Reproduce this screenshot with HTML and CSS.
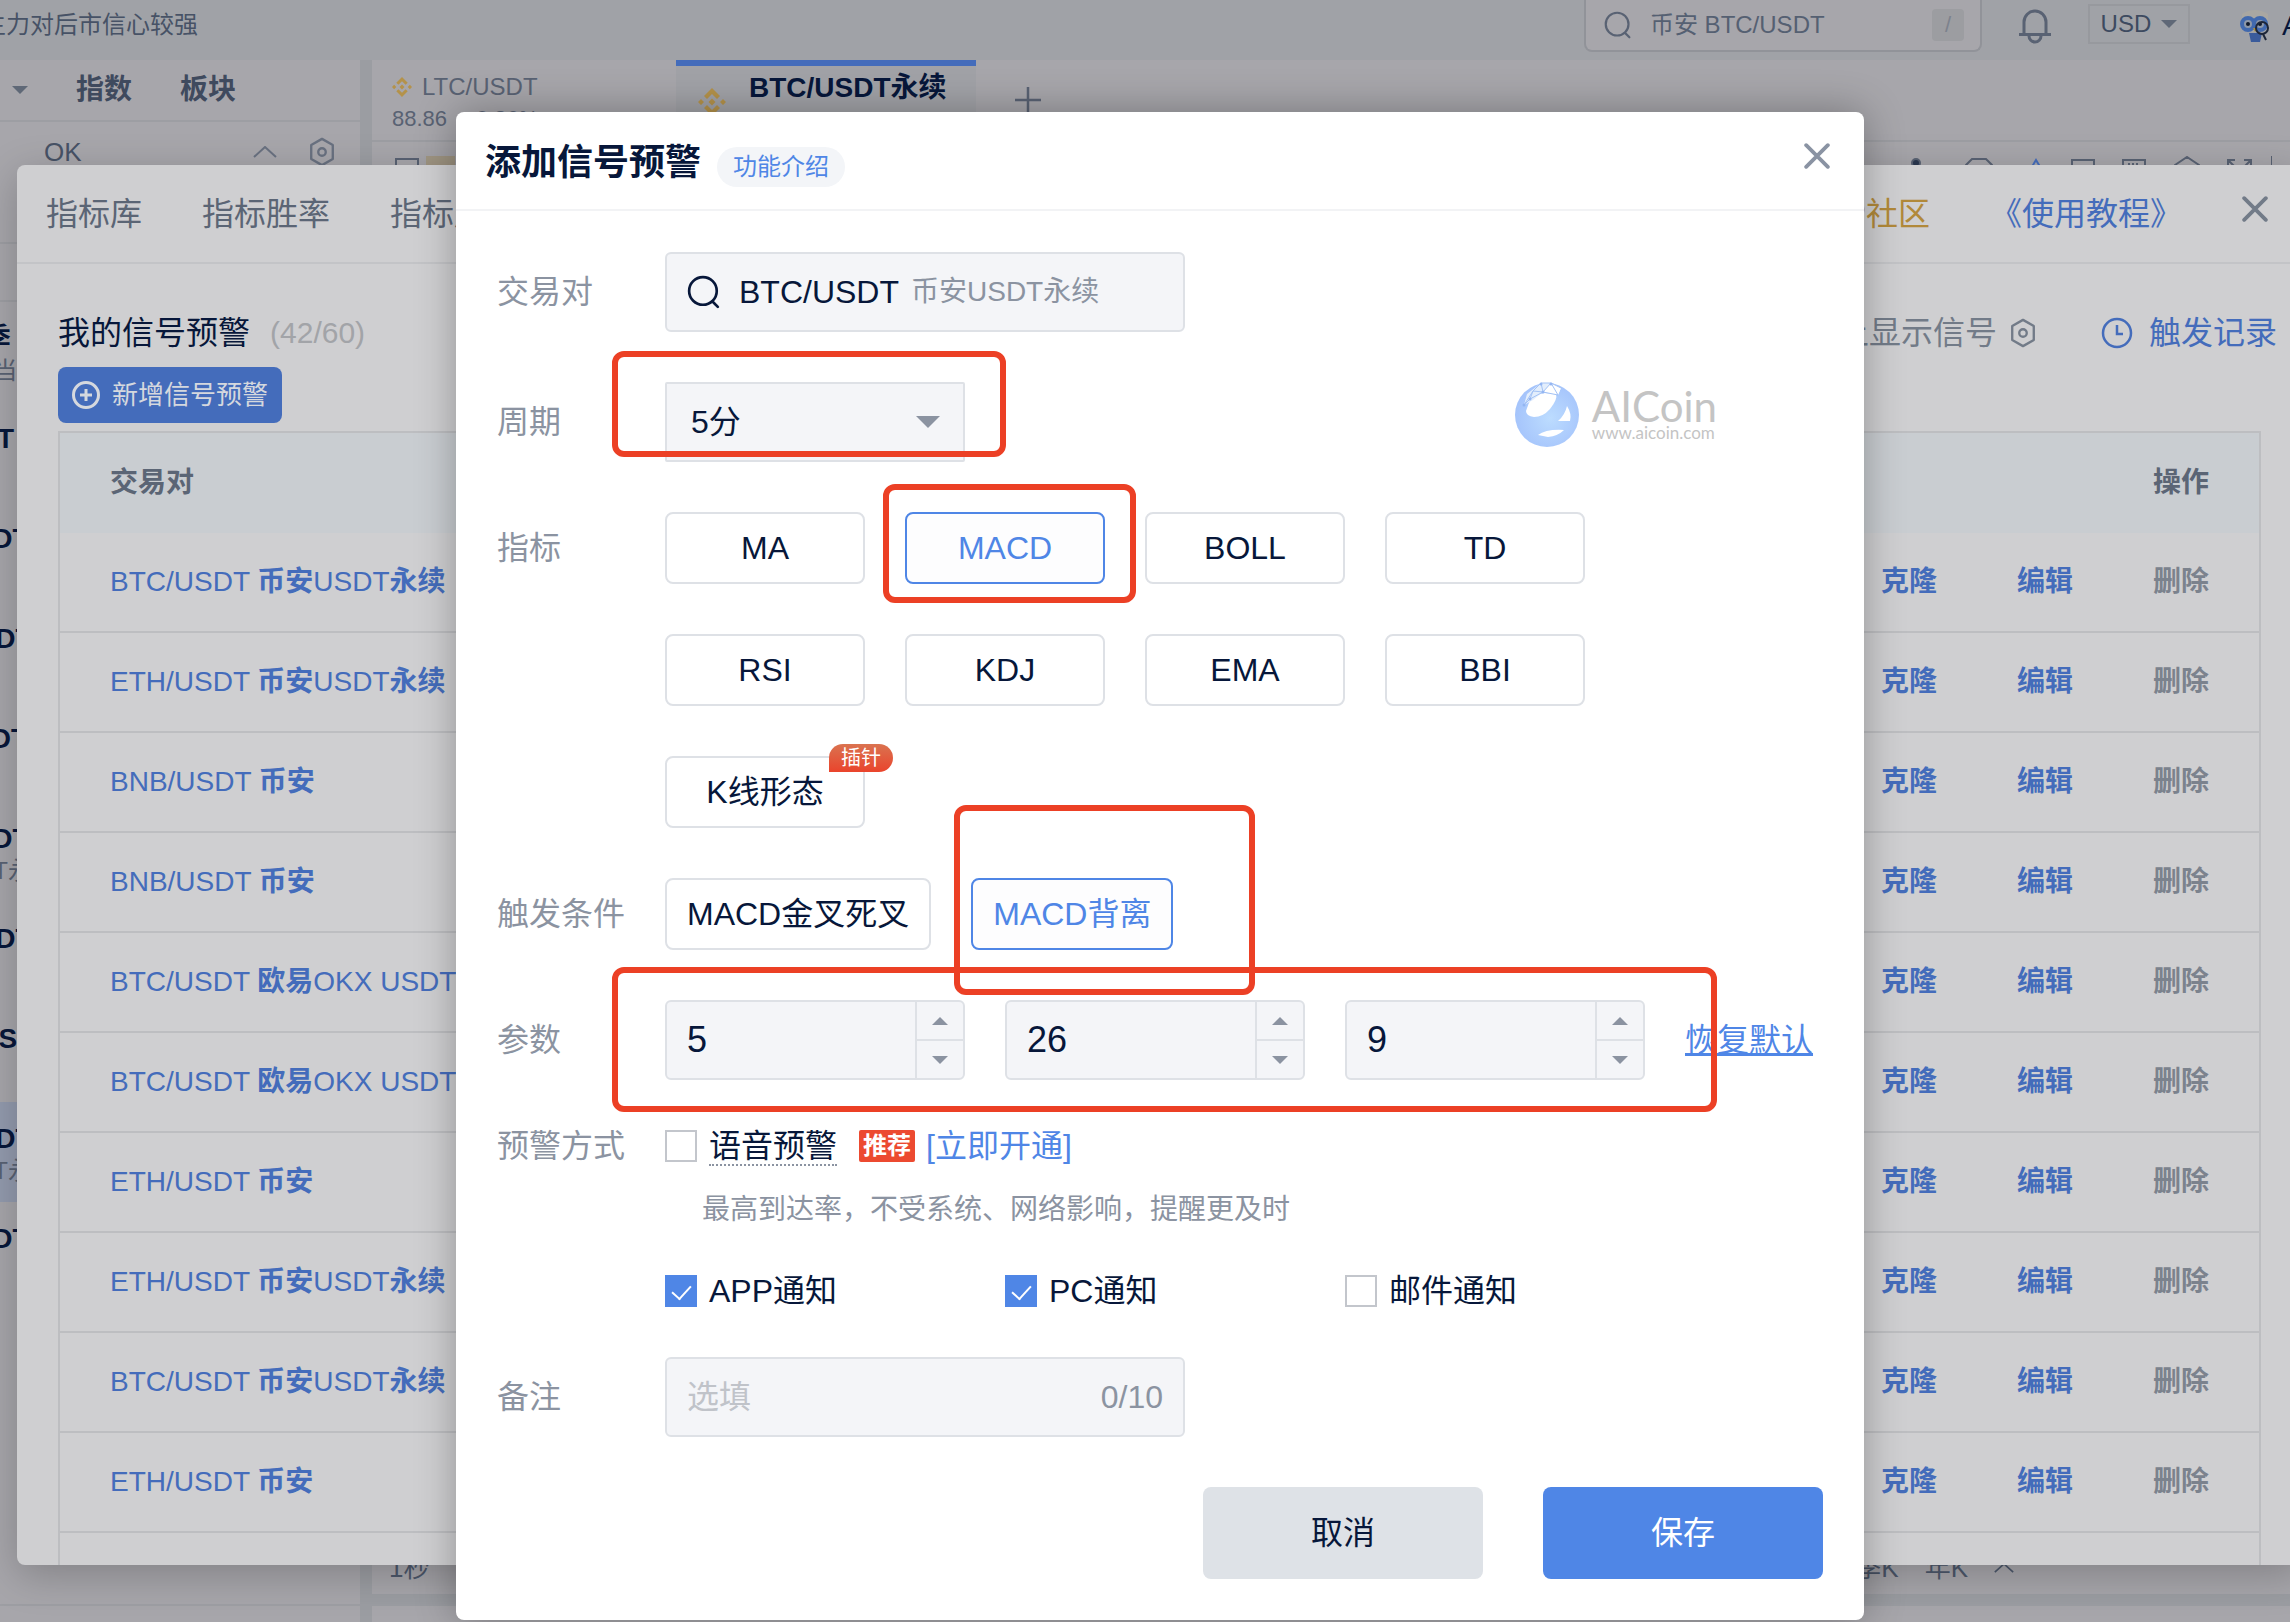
FILE: index.html
```html
<!DOCTYPE html>
<html lang="zh-CN">
<head>
<meta charset="utf-8">
<meta name="viewport" content="width=device-width, initial-scale=1">
<title>添加信号预警</title>
<link rel="stylesheet" href="styles.css">
</head>
<body>
<svg class="defs" width="0" height="0" aria-hidden="true">
  <symbol id="i-search" viewBox="0 0 32 32"><circle cx="15" cy="15" r="13" fill="none" stroke="currentColor" stroke-width="2.500"/><path d="M24 25l5 5" stroke="currentColor" stroke-width="2.500" stroke-linecap="round"/></symbol>
  <symbol id="i-hex" viewBox="0 0 28 32"><path d="M14 2l11.500 6.500v15L14 30 2.500 23.500v-15z" fill="none" stroke="currentColor" stroke-width="2.500" stroke-linejoin="round"/><circle cx="14" cy="16" r="4" fill="none" stroke="currentColor" stroke-width="2.500"/></symbol>
  <symbol id="i-close" viewBox="0 0 24 24"><path d="M2 2l20 20M22 2L2 22" stroke="currentColor" stroke-width="3.500" stroke-linecap="round"/></symbol>
  <symbol id="i-up" viewBox="0 0 24 12"><path d="M1 11L12 1l11 10" fill="none" stroke="currentColor" stroke-width="2"/></symbol>
  <symbol id="i-bnb" viewBox="0 0 28 28"><path fill="currentColor" d="M14 0l8 8-3 3-5-5-5 5-3-3zM14 28l8-8-3-3-5 5-5-5-3 3zM0 14l3-3 3 3-3 3zM22 14l3-3 3 3-3 3zM14 10.500l3.500 3.500-3.500 3.500-3.500-3.500z"/></symbol>
</svg>

<div class="app">
  <header class="topbar">
    <span class="ticker">主力对后市信心较强</span>
    <div class="topbar-right">
      <label class="search"><svg width="28" height="28"><use href="#i-search"/></svg><input type="text" value="币安 BTC/USDT" aria-label="搜索"><kbd>/</kbd></label>
      <button class="bell" aria-label="通知"><svg width="32" height="36" viewBox="0 0 32 36" fill="none" stroke="currentColor" stroke-width="3"><path d="M5 26V14a11 11 0 0122 0v12M0 26.500h32M10 28a6 6 0 0012 0"/></svg></button>
      <button class="currency">USD<i class="tri"></i></button>
      <div class="user"><svg width="32" height="40" viewBox="0 0 32 40"><path d="M3 8q13-8 26 0v13q-13 10-26 0z" fill="#a9a7a2"/><path d="M10 27h13l-2 9h-9z" fill="#3a5b9b"/><circle cx="9" cy="18" r="6" fill="#8e98a8" stroke="#4169ae" stroke-width="4"/><circle cx="21" cy="18" r="6" fill="#8e98a8" stroke="#4169ae" stroke-width="4"/><circle cx="9" cy="18" r="2" fill="#101a2c"/><circle cx="21" cy="18" r="2" fill="#101a2c"/><path d="M14 22l2 4 2-4z" fill="#b09039"/><circle cx="23" cy="22" r="6" fill="none" stroke="#1d2638" stroke-width="2"/><path d="M24 28l3 6" stroke="#1d2638" stroke-width="2"/></svg><span>AICoin</span></div>
    </div>
  </header>
  <div class="workspace">
    <aside class="sidebar">
      <nav class="side-tabs"><span>合约</span><i class="tri"></i><a href="#">指数</a><a href="#">板块</a></nav>
      <div class="side-filter"><span>OK</span><svg width="24" height="12"><use href="#i-up"/></svg><svg width="28" height="30"><use href="#i-hex"/></svg></div>
      <div class="side-head"></div>
      <ul class="pairs">
        <li><b>EOS/当季</b><small>欧易 OKX当季</small></li>
        <li><b>FIL/USDT</b></li>
        <li><b>BTC/USDT</b></li>
        <li><b>BNB/USDT</b></li>
        <li><b>ETH/USDT</b></li>
        <li><b>BTC/USDT</b><small>币安 USDT永续</small></li>
        <li><b>BNB/USDT</b></li>
        <li><b>DOGE/USDT</b></li>
        <li class="on"><b>BNB/USDT</b><small>币安 USDT永续</small></li>
        <li><b>BTC/USDT</b></li>
      </ul>
      <div class="side-foot"></div>
    </aside>
    <main class="main">
      <div class="chart-tabs">
        <div class="chart-tab"><div class="tab-line"><svg class="gold" width="20" height="20"><use href="#i-bnb"/></svg>LTC/USDT</div><div class="tab-price"><span>88.86</span><span>+0.86%</span></div></div>
        <div class="chart-tab active"><svg class="gold" width="28" height="28"><use href="#i-bnb"/></svg><span>BTC/USDT永续</span></div>
        <button class="add" aria-label="新增标签"><svg width="26" height="26" viewBox="0 0 26 26"><path d="M13 0v26M0 13h26" stroke="currentColor" stroke-width="2.500"/></svg></button>
      </div>
      <div class="tools">
        <svg width="60" height="24" viewBox="0 0 60 24"><rect x="1" y="3" width="22" height="18" fill="none" stroke="currentColor" stroke-width="2"/><rect x="31" y="0" width="29" height="24" fill="#a49a86"/></svg>
        <svg width="366" height="24" viewBox="0 0 366 24" fill="none" stroke="currentColor" stroke-width="2"><circle cx="10" cy="7" r="4" fill="#2b3850"/><path d="M60 9l6-6h14l6 6v14H60z"/><path d="M130 4l6 10h-12z" stroke="#446cbb"/><rect x="166" y="4" width="22" height="18"/><rect x="217" y="4" width="22" height="18"/><path d="M222 8h12" stroke-dasharray="2 2"/><path d="M269 9l12-8 12 8v12l-12 3-12-3zM322 11V4h7M345 11V4h-7M322 4l8 8M345 4l-8 8M366 0v24"/></svg>
      </div>
      <div class="chart"></div>
      <div class="periods"><span>1秒</span><span>分时</span><span class="push">季K</span><span>年K</span><svg width="20" height="12"><use href="#i-up"/></svg></div>
      <div class="strip"></div>
      <div class="dock"></div>
    </main>
  </div>
</div>

<section class="panel" aria-label="指标">
  <header class="panel-head">
    <nav><a href="#">指标库</a><a href="#">指标胜率</a><a href="#">指标周期</a></nav>
    <nav class="panel-links"><a class="gold" href="#">VIP社区</a><a class="blue" href="#">《使用教程》</a></nav>
    <button class="close" aria-label="关闭"><svg width="26" height="26"><use href="#i-close"/></svg></button>
  </header>
  <div class="panel-body">
    <div class="panel-title">
      <h2>我的信号预警</h2><span class="count">(42/60)</span>
      <span class="show">K线上显示信号<svg width="28" height="30"><use href="#i-hex"/></svg></span>
      <a class="log" href="#"><svg width="32" height="32" viewBox="0 0 32 32" fill="none" stroke="currentColor" stroke-width="2.500"><circle cx="16" cy="16" r="14"/><path d="M16 8v9h6"/></svg>触发记录</a>
    </div>
    <button class="new"><svg width="28" height="28" viewBox="0 0 28 28" fill="none" stroke="currentColor" stroke-width="3"><circle cx="14" cy="14" r="12.500"/><path d="M14 8v12M8 14h12"/></svg>新增信号预警</button>
    <table class="alerts">
      <thead><tr><th>交易对</th><th class="ops-head">操作</th></tr></thead>
      <tbody>
        <tr><td><a href="#">BTC/USDT <b>币安</b>USDT<b>永续</b></a></td><td><div class="ops"><a href="#">克隆</a><a href="#">编辑</a><a class="del" href="#">删除</a></div></td></tr>
        <tr><td><a href="#">ETH/USDT <b>币安</b>USDT<b>永续</b></a></td><td><div class="ops"><a href="#">克隆</a><a href="#">编辑</a><a class="del" href="#">删除</a></div></td></tr>
        <tr><td><a href="#">BNB/USDT <b>币安</b></a></td><td><div class="ops"><a href="#">克隆</a><a href="#">编辑</a><a class="del" href="#">删除</a></div></td></tr>
        <tr><td><a href="#">BNB/USDT <b>币安</b></a></td><td><div class="ops"><a href="#">克隆</a><a href="#">编辑</a><a class="del" href="#">删除</a></div></td></tr>
        <tr><td><a href="#">BTC/USDT <b>欧易</b>OKX USDT<b>永续</b></a></td><td><div class="ops"><a href="#">克隆</a><a href="#">编辑</a><a class="del" href="#">删除</a></div></td></tr>
        <tr><td><a href="#">BTC/USDT <b>欧易</b>OKX USDT<b>永续</b></a></td><td><div class="ops"><a href="#">克隆</a><a href="#">编辑</a><a class="del" href="#">删除</a></div></td></tr>
        <tr><td><a href="#">ETH/USDT <b>币安</b></a></td><td><div class="ops"><a href="#">克隆</a><a href="#">编辑</a><a class="del" href="#">删除</a></div></td></tr>
        <tr><td><a href="#">ETH/USDT <b>币安</b>USDT<b>永续</b></a></td><td><div class="ops"><a href="#">克隆</a><a href="#">编辑</a><a class="del" href="#">删除</a></div></td></tr>
        <tr><td><a href="#">BTC/USDT <b>币安</b>USDT<b>永续</b></a></td><td><div class="ops"><a href="#">克隆</a><a href="#">编辑</a><a class="del" href="#">删除</a></div></td></tr>
        <tr><td><a href="#">ETH/USDT <b>币安</b></a></td><td><div class="ops"><a href="#">克隆</a><a href="#">编辑</a><a class="del" href="#">删除</a></div></td></tr>
        <tr><td></td><td></td></tr>
      </tbody>
    </table>
  </div>
</section>

<div class="overlay">
<form class="modal" role="dialog" aria-labelledby="dlg-title">
  <header class="modal-head">
    <h1 id="dlg-title">添加信号预警</h1><a class="pill" href="#">功能介绍</a>
    <button type="button" class="close" aria-label="关闭"><svg width="26" height="26"><use href="#i-close"/></svg></button>
  </header>
  <div class="rows">
    <div class="row"><label class="name" for="pair">交易对</label>
      <button type="button" id="pair" class="box pair"><svg width="34" height="34"><use href="#i-search"/></svg><span>BTC/USDT</span><small>币安USDT永续</small></button>
    </div>
    <div class="row"><label class="name" for="period">周期</label>
      <div class="select"><select id="period" class="box"><option>5分</option></select><i class="mark mark-period"></i></div>
      <div class="brand">
        <svg width="66" height="66" viewBox="0 0 66 66"><defs><radialGradient id="g" cx=".55" cy=".55" r=".6"><stop offset="0" stop-color="#bcdcff"/><stop offset="1" stop-color="#a3c2fb"/></radialGradient></defs><circle cx="33" cy="33" r="32" fill="url(#g)"/><path d="M18 15Q24 12 30 11L42 12Q44 17 36 27 29 35 20 35 12 34 12 29 14 22 18 15z" fill="#fff"/><path d="M27 1L37 1 47 6 44 13 29 10 19 18 10 23 13 12z" fill="#e3eefc"/><path d="M37 1L47 6 44 13 29 10z" fill="#fff"/><path d="M10 23L19 9 27 1 37 1 29 10 19 9 16 17 10 23M29 10L27 1M29 10L44 13 37 1 47 6M16 17L29 10" fill="none" stroke="#a3c2f5"/><g fill="#94b6f2"><circle cx="27" cy="2" r="1.500"/><circle cx="37" cy="2" r="1.500"/><circle cx="29" cy="10" r="1.500"/><circle cx="16" cy="17" r="1.500"/><circle cx="10" cy="23" r="1.500"/></g><path d="M53 24Q58 32 56 39L44 39Q51 33 53 24z" fill="#fff"/><path d="M24 53Q32 47 50 48 44 54 34 55z" fill="#fff"/></svg>
        <div><strong>AICoin</strong><span>www.aicoin.com</span></div>
      </div>
    </div>
    <div class="row"><span class="name short">指标</span>
      <div class="grid">
        <button type="button" class="opt">MA</button>
        <div class="cell"><button type="button" class="opt on">MACD</button><i class="mark mark-macd"></i></div>
        <button type="button" class="opt">BOLL</button>
        <button type="button" class="opt">TD</button>
        <button type="button" class="opt">RSI</button>
        <button type="button" class="opt">KDJ</button>
        <button type="button" class="opt">EMA</button>
        <button type="button" class="opt">BBI</button>
        <div class="cell"><button type="button" class="opt">K线形态</button><span class="badge">插针</span></div>
      </div>
    </div>
    <div class="row"><span class="name short">触发条件</span>
      <div class="triggers"><button type="button" class="opt">MACD金叉死叉</button><div class="cell"><button type="button" class="opt on">MACD背离</button><i class="mark mark-trigger"></i></div></div>
    </div>
    <div class="row"><span class="name">参数</span>
      <div class="params">
        <div class="box num"><input type="number" value="5" aria-label="快线"><div class="spin"><button type="button" aria-label="增加"><i class="up"></i></button><button type="button" aria-label="减少"><i class="down"></i></button></div></div>
        <div class="box num"><input type="number" value="26" aria-label="慢线"><div class="spin"><button type="button" aria-label="增加"><i class="up"></i></button><button type="button" aria-label="减少"><i class="down"></i></button></div></div>
        <div class="box num"><input type="number" value="9" aria-label="信号线"><div class="spin"><button type="button" aria-label="增加"><i class="up"></i></button><button type="button" aria-label="减少"><i class="down"></i></button></div></div>
        <a class="reset" href="#">恢复默认</a>
        <i class="mark mark-params"></i>
      </div>
    </div>
    <div class="row"><span class="name line">预警方式</span>
      <div class="ways">
        <div class="voice"><label class="check"><input type="checkbox"><span class="dotted">语音预警</span></label><span class="tag">推荐</span><a href="#">[立即开通]</a></div>
        <p>最高到达率，不受系统、网络影响，提醒更及时</p>
        <div class="notices"><label class="check"><input type="checkbox" checked><span>APP通知</span></label><label class="check"><input type="checkbox" checked><span>PC通知</span></label><label class="check"><input type="checkbox"><span>邮件通知</span></label></div>
      </div>
    </div>
    <div class="row"><label class="name" for="note">备注</label>
      <div class="box note"><input id="note" type="text" placeholder="选填"><span>0/10</span></div>
    </div>
  </div>
  <footer class="actions"><button type="button" class="cancel">取消</button><button type="submit" class="save">保存</button></footer>
</form>
</div>
</body>
</html>
```
FILE: styles.css
```css
* { box-sizing: border-box; }
html, body { margin: 0; height: 100%; overflow: hidden; }
body { font-family: "Liberation Sans", "Noto Sans CJK SC", sans-serif; font-size: 32px; line-height: 40px; color: #07173a; background: #a7a6ab; position: relative; }
a { color: inherit; text-decoration: none; }
button, input, select { font: inherit; color: inherit; border: 0; padding: 0; margin: 0; background: none; outline: 0; }
h1, h2, p, ul { margin: 0; padding: 0; font-weight: 400; }
svg { flex: none; display: block; }
.defs { position: absolute; }
.gold { color: #b4924a; }
.tri { width: 0; height: 0; border: 8px solid transparent; border-top-color: #5f6877; border-bottom: 0; }

/* workspace behind the windows */
.app { height: 100%; display: flex; flex-direction: column; font-size: 24px; color: #596273; }
.topbar { height: 60px; flex: none; display: flex; justify-content: space-between; background: #a0a2a7; white-space: nowrap; }
.ticker { margin-left: -18px; line-height: 50px; color: #475266; }
.topbar-right { display: flex; align-items: flex-start; margin-right: -76px; }
.search { width: 398px; height: 52px; border: 2px solid #919399; border-top: 0; border-radius: 0 0 8px 8px; background: #a7a6ab; display: flex; align-items: center; padding: 0 16px 0 18px; gap: 18px; }
.search input { flex: 1; min-width: 0; color: #556072; }
.search kbd { width: 32px; height: 32px; border-radius: 4px; background: #9c9da1; text-align: center; line-height: 32px; font-family: inherit; font-size: 22px; color: #7c828d; }
.bell { margin: 8px 37px 0; }
.currency { width: 102px; height: 40px; margin-top: 4px; border: 2px solid #97999e; display: flex; align-items: center; justify-content: center; gap: 10px; color: #3d4a60; }
.user { display: flex; gap: 11px; margin: 6px 0 0 49px; font-size: 28px; color: #07173a; }
.workspace { flex: 1; min-height: 0; display: flex; gap: 12px; background: #9b9da2; }
.sidebar { width: 360px; background: #a7a6ab; display: flex; flex-direction: column; overflow: hidden; }
.side-tabs { height: 62px; border-bottom: 2px solid #9d9ea3; display: flex; align-items: center; font-size: 28px; font-weight: 700; color: #3f4a5e; margin-left: -56px; flex: none; }
.side-tabs .tri { margin: 0 0 0 12px; }
.side-tabs a { margin-left: 48px; }
.side-filter { height: 60px; flex: none; display: flex; align-items: center; padding: 0 24px 0 44px; font-size: 26px; color: #475266; }
.side-filter svg { color: #697180; }
.side-filter svg:first-of-type { margin: 0 31px 0 auto; }
.side-head { height: 60px; flex: none; border-top: 2px solid #9d9ea3; margin-top: 60px; border-bottom: 2px solid #9d9ea3; }
.pairs { flex: 1; min-height: 0; list-style: none; }
.pairs li { height: 100px; padding-top: 17px; }
.pairs b, .pairs small { display: block; margin-left: -112px; white-space: nowrap; }
.pairs b { font-size: 28px; color: #07173a; }
.pairs small { font-size: 24px; line-height: 24px; }
.pairs .on { background: #939bae; }
.side-foot { height: 18px; border-top: 2px solid #9d9ea3; }
.main { flex: 1; min-width: 0; display: flex; flex-direction: column; background: #a7a6ab; }
.chart-tabs { height: 82px; flex: none; display: flex; border-bottom: 2px solid #9d9ea3; }
.chart-tab { width: 304px; padding: 7px 20px 0; }
.tab-line { display: flex; align-items: center; gap: 10px; }
.tab-price { display: flex; gap: 16px; font-size: 22px; line-height: 24px; }
.chart-tab.active { width: 300px; border-top: 6px solid #446cbb; background: #a1a2a7; padding: 2px 0 0 22px; display: flex; gap: 23px; font-size: 28px; font-weight: 700; color: #07173a; }
.active svg { margin-top: 20px; }
.add { margin-left: 39px; }
.tools { height: 60px; flex: none; display: flex; justify-content: space-between; padding: 14px 18px 0 23px; }
.chart { flex: 1; }
.periods { height: 58px; display: flex; align-items: center; gap: 26px; padding: 6px 276px 0 17px; font-size: 26px; color: #4d586b; }
.push { margin-left: auto; }
.strip { height: 12px; background: #9b9da2; }
.dock { height: 16px; }

/* indicator window */
.panel { position: absolute; left: 17px; right: -12px; top: 165px; bottom: 57px; background: #cfcfd1; border-radius: 8px; box-shadow: 0 10px 40px rgba(0, 0, 0, .22); overflow: hidden; display: flex; flex-direction: column; color: #5b6575; }
.panel-head { height: 99px; flex: none; border-bottom: 2px solid #c3c4c7; display: flex; align-items: center; padding: 0 34px 0 29px; }
.panel-head nav { display: flex; gap: 60px; }
.panel-head .panel-links { margin-left: auto; }
.panel-head .gold { color: #b1893a; }
.blue, .log { color: #446cbb; }
.panel-head .close { margin: 0 0 10px 60px; color: #727b88; }
.panel-body { padding: 49px 41px 0; }
.panel-title { display: flex; align-items: center; height: 40px; margin-right: -16px; }
.panel-title h2 { font-size: 32px; color: #07173a; }
.count { margin-left: 20px; font-size: 30px; color: #a2a4a8; }
.show { margin-left: auto; display: flex; align-items: center; gap: 12px; color: #727b88; }
.log { display: flex; align-items: center; gap: 16px; margin-left: 64px; }
.new { margin-top: 14px; width: 224px; height: 56px; border-radius: 8px; background: #446cbb; color: #d5d8de; font-size: 26px; display: flex; align-items: center; justify-content: center; gap: 12px; }
.alerts { width: 100%; margin-top: 8px; border-collapse: separate; border-spacing: 0; border: 2px solid #bdbec1; border-bottom: 0; font-size: 28px; }
.alerts th { height: 100px; background: #c9cdd1; text-align: left; padding: 0 50px; font-weight: 700; }
.alerts .ops-head { text-align: right; }
.alerts td { height: 100px; padding: 0 50px; border-bottom: 2px solid #bdbec1; color: #446cbb; }
.ops { display: flex; justify-content: flex-end; gap: 80px; font-weight: 700; }
.ops .del { color: #7b828d; }

/* dialog */
.overlay { position: absolute; inset: 0; padding: 112px 0 0 30px; display: flex; justify-content: center; align-items: flex-start; }
.modal { width: 1408px; background: #fff; border-radius: 8px; box-shadow: 0 0 40px rgba(0, 0, 0, .3); }
.modal-head { height: 99px; border-bottom: 2px solid #f2f3f5; display: flex; align-items: baseline; padding: 31px 34px 0 29px; }
.modal-head h1 { font-size: 36px; font-weight: 700; }
.pill { margin-left: 16px; padding: 0 16px; border-radius: 20px; background: #f3f5f8; font-size: 24px; color: #4f86e6; }
.close { color: #8a93a3; }
.modal-head .close { margin-left: auto; align-self: flex-start; }
.rows { display: flex; flex-direction: column; gap: 50px; padding: 41px 41px 0; }
.row { display: flex; align-items: flex-start; }
.name { width: 168px; flex: none; line-height: 80px; color: #8b93a1; }
.name.short { line-height: 72px; }
.name.line { line-height: 32px; }
.box { height: 80px; border: 2px solid #dee1e6; border-radius: 6px; background: #f4f5f8; display: flex; align-items: center; }
.pair { width: 520px; padding-left: 20px; }
.pair span { margin-left: 18px; }
.pair small { margin-left: 12px; font-size: 28px; color: #8b93a1; }
.select, .cell, .params { position: relative; }
.select select { width: 300px; padding-left: 24px; border-radius: 2px; appearance: none; }
.select::after { content: ""; position: absolute; right: 25px; top: 34px; border: 12px solid transparent; border-top-color: #8b93a1; border-bottom: 0; }
.brand { margin-left: auto; padding-right: 106px; display: flex; gap: 12px; color: #c4c4c4; font-family: Lato, sans-serif; }
.brand strong { display: block; margin-top: 6px; font-size: 42px; line-height: 36px; font-weight: 400; }
.brand span { display: block; font-size: 17px; line-height: 18px; }
.grid { display: grid; grid-template-columns: repeat(4, 200px); gap: 50px 40px; }
.opt { width: 100%; height: 72px; border: 2px solid #dee1e6; border-radius: 8px; background: #fff; padding: 0 20px; white-space: nowrap; }
.opt.on { border-color: #4f86e6; color: #4f86e6; background: #fdfdfe; }
.badge { position: absolute; top: -12px; right: -28px; width: 64px; height: 28px; border-radius: 14px 14px 14px 0; background: linear-gradient(#da7350, #ea442c); color: #fff; font-size: 20px; line-height: 28px; text-align: center; }
.triggers { display: flex; gap: 40px; }
.triggers .opt { width: auto; }
.params { display: flex; gap: 40px; }
.num { width: 300px; font-size: 36px; align-items: stretch; }
.num input { flex: 1; min-width: 0; padding-left: 20px; appearance: textfield; }
.num input::-webkit-inner-spin-button { appearance: none; }
.spin { width: 48px; border-left: 2px solid #dee1e6; display: flex; flex-direction: column; }
.spin button { flex: 1; display: flex; align-items: center; justify-content: center; }
.spin button + button { border-top: 2px solid #dee1e6; }
.up, .down { border: 8px solid transparent; }
.up { border-top: 0; border-bottom-color: #8b93a1; }
.down { border-bottom: 0; border-top-color: #8b93a1; }
.reset { line-height: 80px; color: #4f86e6; text-decoration: underline; }
.check { display: flex; align-items: center; gap: 12px; line-height: 32px; color: #07173a; }
.check input { appearance: none; width: 32px; height: 32px; flex: none; border: 2px solid #c3c6cc; background: #fff; display: flex; justify-content: center; }
.check input:checked { border-color: #4f86e6; background: #4f86e6; }
.check input:checked::after { content: ""; width: 9px; height: 16px; margin-top: 4px; border: solid #fff; border-width: 0 2px 2px 0; rotate: 42deg; }
.dotted { padding-bottom: 2px; border-bottom: 2px dotted #8b93a1; margin-bottom: -4px; }
.voice { height: 32px; display: flex; align-items: center; color: #4f86e6; }
.tag { margin: 0 11px 0 22px; padding: 0 4px; background: #ec4a30; border-radius: 2px; color: #fff; font-size: 24px; font-weight: 700; line-height: 32px; }
.ways p { margin: 28px 0 45px 37px; font-size: 28px; color: #8b93a1; }
.notices { display: grid; grid-template-columns: repeat(3, 300px); gap: 40px; }
.note { width: 520px; padding: 0 20px; color: #8b93a1; }
.note input { flex: 1; min-width: 0; }
.note input::placeholder { color: #c0c3c9; opacity: 1; }
.actions { display: flex; justify-content: flex-end; gap: 60px; padding: 50px 41px 41px; }
.actions button { width: 280px; height: 92px; border-radius: 8px; }
.cancel { background: #dee2e7; }
.save { background: #4f86e6; color: #fff; }

/* red highlight frames over the form */
.mark { position: absolute; border: 6px solid #ec4025; border-radius: 12px; pointer-events: none; z-index: 1; }
.mark-period { left: -53px; top: -31px; width: 394px; height: 106px; }
.mark-macd { left: -22px; top: -28px; width: 253px; height: 119px; }
.mark-trigger { left: -17px; top: -73px; width: 301px; height: 190px; }
.mark-params { left: -53px; top: -33px; width: 1105px; height: 145px; }
```
